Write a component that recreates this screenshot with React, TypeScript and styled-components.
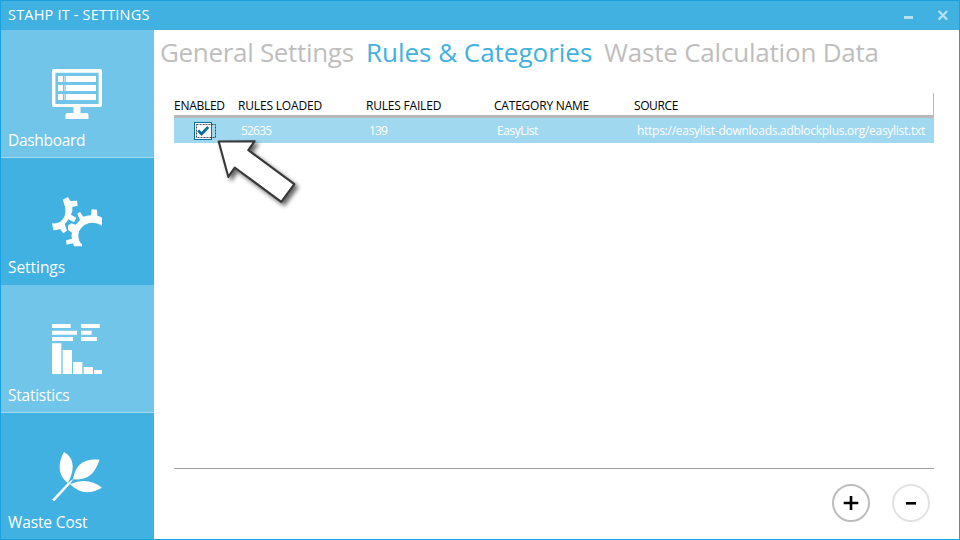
import React from 'react';
import styled, { createGlobalStyle } from 'styled-components';

const GlobalStyle = createGlobalStyle`
  * { box-sizing: border-box; }
  body {
    margin: 0;
    font-family: 'Open Sans', 'Noto Sans', sans-serif;
  }
`;

const Window = styled.div`
  width: 960px;
  height: 540px;
  border: 1px solid #1ba1e2;
  background: #fff;
  display: flex;
  flex-direction: column;
  overflow: hidden;
`;

const TitleBar = styled.header`
  flex: none;
  height: 29px;
  padding: 0 10px 0 7px;
  background: #41b1e1;
  display: flex;
  align-items: center;
  justify-content: space-between;
`;

const Title = styled.h1`
  margin: 0;
  padding-bottom: 1px;
  font-size: 14.5px;
  font-weight: 400;
  line-height: 22px;
  letter-spacing: 0.19px;
  color: #fff;
  white-space: nowrap;
`;

const WindowControls = styled.svg`
  width: 46px;
  height: 29px;
  display: block;
`;

const Body = styled.div`
  flex: 1;
  display: flex;
  min-height: 0;
`;

const Sidebar = styled.nav`
  flex: none;
  width: 153px;
`;

const Tile = styled.a<{ $light?: boolean }>`
  display: flex;
  flex-direction: column;
  height: ${({ $light }) => ($light ? 128 : 127)}px;
  padding: 39px 0 0 7px;
  background: ${({ $light }) => ($light ? '#71c5e8' : '#41b1e1')};
  border-bottom: ${({ $light }) => ($light ? '1px solid #a6daf0' : 'none')};
`;

const TileIcon = styled.svg`
  width: 50px;
  height: 50px;
  margin-left: 44px;
  fill: #fff;
  display: block;
  flex: none;
`;

const TileLabel = styled.span<{ $spacing: number; $raise?: boolean }>`
  margin-top: ${({ $raise }) => ($raise ? 9 : 10)}px;
  font-size: 15.5px;
  line-height: 22px;
  letter-spacing: ${({ $spacing }) => $spacing}px;
  color: #fff;
  white-space: nowrap;
`;

const Main = styled.main`
  flex: 1;
  display: flex;
  flex-direction: column;
`;

const Tabs = styled.div`
  display: flex;
  height: 63px;
  padding: 3px 0 0 6px;
`;

const Tab = styled.button<{ $active?: boolean; $width: number; $spacing: number }>`
  flex: none;
  width: ${({ $width }) => $width}px;
  height: 38px;
  padding: 0;
  border: 0;
  background: none;
  text-align: left;
  font: 400 26px/38px 'Open Sans', 'Noto Sans', sans-serif;
  letter-spacing: ${({ $spacing }) => $spacing}px;
  white-space: nowrap;
  color: ${({ $active }) => ($active ? '#41b1e1' : '#bebebe')};
`;

const Table = styled.section`
  height: 376px;
  width: 760px;
  margin-left: 20px;
  border-bottom: 1px solid #a0a0a0;
`;

const TableRow = styled.div`
  display: grid;
  grid-template-columns: 64px 128px 128px 140px 1fr;
  align-items: center;
  font-size: 12px;
  line-height: 16px;
  white-space: nowrap;
`;

const HeaderRow = styled(TableRow)`
  height: 25px;
  border-bottom: 3px solid #b9b9b9;
  background: linear-gradient(#b9b9b9, #b9b9b9) right / 1px 100% no-repeat;
  color: #000;
`;

const DataRow = styled(TableRow)`
  height: 25px;
  background: #a0d8ef;
  color: #fff;
`;

const HeaderCell = styled.span<{ $spacing: number }>`
  padding-top: 3px;
  letter-spacing: ${({ $spacing }) => $spacing}px;
`;

const DataCell = styled.span<{ $spacing: number }>`
  padding-left: 3px;
  letter-spacing: ${({ $spacing }) => $spacing}px;
`;

const CheckboxCell = styled.span`
  position: relative;
  padding-left: 20px;
`;

const CheckboxIcon = styled.svg`
  width: 23px;
  height: 18px;
  display: block;
`;

const Pointer = styled.svg`
  position: absolute;
  left: 36px;
  top: 8px;
  width: 100px;
  height: 80px;
  overflow: visible;
  filter: drop-shadow(3px 3px 2px rgba(0, 0, 0, 0.6));
`;

const Footer = styled.footer`
  display: flex;
  gap: 22px;
  padding: 15px 0 0 678px;
`;

const RoundButton = styled.button<{ $muted?: boolean }>`
  width: 38px;
  height: 38px;
  padding: 0;
  border: 2px solid ${({ $muted }) => ($muted ? '#e2e2e2' : '#bcbcbc')};
  border-radius: 50%;
  background: #fff;
  display: grid;
  place-items: center;
`;

const DashboardIcon = () => (
  <TileIcon viewBox="0 0 50 50">
    <path
      fillRule="evenodd"
      d="M2 0H48Q50 0 50 2V36Q50 38 48 38H2Q0 38 0 36V2Q0 0 2 0ZM3.4 3.8V35H46.6V3.8Z"
    />
    <path d="M6 7h5v6H6zM13.7 7h30.3v6H13.7zM6 16h5v6H6zM13.7 16h30.3v6H13.7zM6 25h5v6H6zM13.7 25h30.3v6H13.7z" />
    <path fillOpacity="0.5" d="M12 7h1v6h-1zM12 16h1v6h-1zM12 25h1v6h-1z" />
    <path d="M21.5 38h7v6H35q1.5 0 1.5 3v3h-23v-3q0-3 1.5-3h6.5z" />
  </TileIcon>
);

const SettingsIcon = () => (
  <TileIcon viewBox="156 125 150 150">
    <path d="M188 133 204 125 211 137 231 136 233 151 217 155Q219 168 213 178L229 187 222 201 205 192Q201 200 194 206L201 226 190 234 180 221Q171 225 160 225L156 204Q176 206 187 193 198 180 196 160 194 147 188 133Z" />
    <path d="M232 175 240 170 250 184Q260 181 273 180L275 162 291 163 292 181Q300 183 306 187V211Q290 200 268 203 238 212 235 238 235 258 246 267V273H222L219 264 200 268 198 255 216 250Q213 240 216 232L204 223V211L214 204 227 208 240 194Z" />
  </TileIcon>
);

const StatisticsIcon = () => (
  <TileIcon viewBox="156 120 150 150">
    <path d="M156 120h56v12h-56zM243 120h56v12h-56zM156 140h75v12h-75zM243 140h32v12h-32zM156 159h63v12h-63zM243 159h48v12h-48z" />
    <path d="M156 178h28v92h-28zM188 198h28v72h-28zM219 234h28v36h-28zM251 249h28v21h-28zM282 258h24v12h-24z" />
  </TileIcon>
);

const LeafIcon = () => (
  <TileIcon viewBox="156 125 150 150">
    <path d="M192 125C224 142 225 182 203 217 172 195 174 156 192 125Z" />
    <path d="M299 148C254 143 226 160 219 207 267 209 284 189 299 148Z" />
    <path d="M306 232C277 208 244 206 210 222 240 249 266 254 306 232Z" />
    <path d="M156 268 206 215 221 205 212 219 163 273Z" />
  </TileIcon>
);

const tiles = [
  { label: 'Dashboard', light: true, spacing: -0.3, icon: <DashboardIcon /> },
  { label: 'Settings', light: false, spacing: -0.05, icon: <SettingsIcon /> },
  { label: 'Statistics', light: true, spacing: -0.24, icon: <StatisticsIcon /> },
  { label: 'Waste Cost', light: false, spacing: -0.12, icon: <LeafIcon /> },
];

export default function App() {
  return (
    <>
      <GlobalStyle />
      <Window>
        <TitleBar>
          <Title>STAHP IT - SETTINGS</Title>
          <WindowControls viewBox="0 0 46 29">
            <path fill="#b6e0f3" d="M1 15h9v3H1z" />
            <path d="M35.6 10 44.2 18.6M44.2 10 35.6 18.6" stroke="#b6e0f3" strokeWidth="2.2" />
          </WindowControls>
        </TitleBar>
        <Body>
          <Sidebar>
            {tiles.map(({ label, light, spacing, icon }) => (
              <Tile key={label} $light={light}>
                {icon}
                <TileLabel $spacing={spacing} $raise={!light}>{label}</TileLabel>
              </Tile>
            ))}
          </Sidebar>
          <Main>
            <Tabs>
              <Tab $width={206} $spacing={-0.32}>General Settings</Tab>
              <Tab $width={238} $spacing={-0.02} $active>Rules &amp; Categories</Tab>
              <Tab $width={290} $spacing={-0.21}>Waste Calculation Data</Tab>
            </Tabs>
            <Table>
              <HeaderRow>
                <HeaderCell $spacing={-0.28}>ENABLED</HeaderCell>
                <HeaderCell $spacing={-0.17}>RULES LOADED</HeaderCell>
                <HeaderCell $spacing={-0.2}>RULES FAILED</HeaderCell>
                <HeaderCell $spacing={-0.21}>CATEGORY NAME</HeaderCell>
                <HeaderCell $spacing={-0.4}>SOURCE</HeaderCell>
              </HeaderRow>
              <DataRow>
                <CheckboxCell>
                  <CheckboxIcon viewBox="0 0 23 18">
                    <rect x="0.5" y="0.5" width="17" height="17" fill="#fff" stroke="#086f9e" />
                    <rect x="2.5" y="2.5" width="19" height="13" fill="none" stroke="#222" strokeWidth="0.8" strokeDasharray="2 1" />
                    <path d="M4.2 8.6 7.6 12 14.2 5" fill="none" stroke="#086f9e" strokeWidth="2.8" />
                  </CheckboxIcon>
                  <Pointer viewBox="0 0 100 80">
                    <path
                      d="M8.7 11.5 44.7 11.2 38.3 20.2 84.3 54.2 71.3 71.8 24.7 37.5 18.3 46.8Z"
                      fill="#fff"
                      stroke="#383838"
                      strokeWidth="2.1"
                      strokeLinejoin="round"
                    />
                  </Pointer>
                </CheckboxCell>
                <DataCell $spacing={-0.8}>52635</DataCell>
                <DataCell $spacing={-0.8}>139</DataCell>
                <DataCell $spacing={-0.43}>EasyList</DataCell>
                <DataCell $spacing={-0.27}>https://easylist-downloads.adblockplus.org/easylist.txt</DataCell>
              </DataRow>
            </Table>
            <Footer>
              <RoundButton aria-label="Add">
                <svg width="16" height="16" viewBox="0 0 16 16">
                  <path d="M0.7 6.8h6V1h2.6v5.8h6v2.5h-6V15H6.7V9.3h-6z" />
                </svg>
              </RoundButton>
              <RoundButton aria-label="Remove" $muted>
                <svg width="16" height="16" viewBox="0 0 16 16">
                  <path d="M3 7h10v2.6H3z" />
                </svg>
              </RoundButton>
            </Footer>
          </Main>
        </Body>
      </Window>
    </>
  );
}
